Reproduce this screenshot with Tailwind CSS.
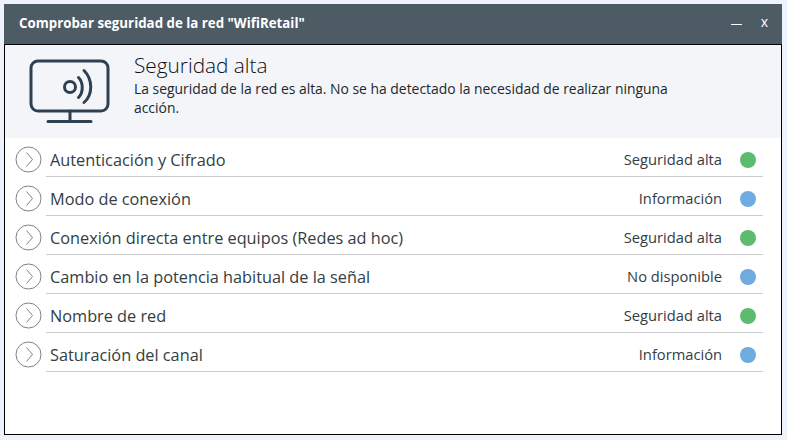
<!DOCTYPE html>
<html lang="es">
  <head>
    <meta charset="UTF-8" />
    <title>Comprobar seguridad</title>
    <script src="https://cdn.jsdelivr.net/npm/@tailwindcss/browser@4"></script>
  </head>
  <body class="bg-[#eef2fa] font-['Open_Sans',sans-serif] text-[#333d44]">
    <div class="w-[787px] h-[440px] pt-[4px] pl-[4px]">
      <div class="w-[778px] h-[431px] flex flex-col">
        <header class="h-[41px] shrink-0 bg-[#4d5b65] border-b border-black flex items-center pl-[15px] pr-[14px] text-white">
          <h1 class="text-[13.3px] font-bold">Comprobar seguridad de la red "WifiRetail"</h1>
          <div class="ml-auto flex items-center gap-[19px]">
            <span class="block w-[11px] h-px bg-white"></span>
            <span class="text-[14px] leading-none pb-[5px]">x</span>
          </div>
        </header>
        <div class="flex-1 flex flex-col border-x border-b border-black bg-white min-h-0">
          <section class="h-[93px] shrink-0 bg-[#f3f5f8] flex pl-[24px]">
            <svg class="mt-[14px] shrink-0" width="82" height="66" viewBox="0 0 82 66" fill="none" stroke="#2f4052" stroke-width="3" stroke-linecap="round">
              <rect x="2" y="2" width="77" height="50" rx="7" />
              <path d="M41 52v10.500M19 62.500h43" />
              <circle cx="41" cy="28" r="5.500" />
              <path d="M49.500 18.500c5 5 5 15 0 20M55 11.500c9 9 9 24 0 32" />
            </svg>
            <div class="ml-[23px] pt-[7px]">
              <h2 class="text-[20.800px] font-light leading-[27px] text-[#0c1014]">Seguridad alta</h2>
              <p class="w-[560px] text-[13.900px] leading-[19px] text-[#20282e]">La seguridad de la red es alta. No se ha detectado la necesidad de realizar ninguna acción.</p>
            </div>
          </section>
          <ul class="pl-[10px] pr-[18px]">
            <li class="h-[39px] flex">
              <svg class="mt-[8px] shrink-0" width="27" height="27" viewBox="0 0 27 27" fill="none" stroke="#808080"><circle cx="13.500" cy="13.500" r="12.500" /><path d="M11.500 6.500l6 7-6 7" /></svg>
              <div class="ml-[4px] flex-1 h-full flex items-center border-b border-[#cccccc] pt-[6px] pl-[4px] pr-[7px]">
                <span class="text-[16.300px]">Autenticación y Cifrado</span>
                <span class="ml-auto pb-[2px] text-[14.700px]">Seguridad alta</span>
                <span class="ml-[18px] w-[16px] h-[16px] rounded-full bg-[#5dba6f]"></span>
              </div>
            </li>
            <li class="h-[39px] flex">
              <svg class="mt-[8px] shrink-0" width="27" height="27" viewBox="0 0 27 27" fill="none" stroke="#808080"><circle cx="13.500" cy="13.500" r="12.500" /><path d="M11.500 6.500l6 7-6 7" /></svg>
              <div class="ml-[4px] flex-1 h-full flex items-center border-b border-[#cccccc] pt-[6px] pl-[4px] pr-[7px]">
                <span class="text-[16.300px]">Modo de conexión</span>
                <span class="ml-auto pb-[2px] text-[14.700px]">Información</span>
                <span class="ml-[18px] w-[16px] h-[16px] rounded-full bg-[#6fabe0]"></span>
              </div>
            </li>
            <li class="h-[39px] flex">
              <svg class="mt-[8px] shrink-0" width="27" height="27" viewBox="0 0 27 27" fill="none" stroke="#808080"><circle cx="13.500" cy="13.500" r="12.500" /><path d="M11.500 6.500l6 7-6 7" /></svg>
              <div class="ml-[4px] flex-1 h-full flex items-center border-b border-[#cccccc] pt-[6px] pl-[4px] pr-[7px]">
                <span class="text-[16.300px]">Conexión directa entre equipos (Redes ad hoc)</span>
                <span class="ml-auto pb-[2px] text-[14.700px]">Seguridad alta</span>
                <span class="ml-[18px] w-[16px] h-[16px] rounded-full bg-[#5dba6f]"></span>
              </div>
            </li>
            <li class="h-[39px] flex">
              <svg class="mt-[8px] shrink-0" width="27" height="27" viewBox="0 0 27 27" fill="none" stroke="#808080"><circle cx="13.500" cy="13.500" r="12.500" /><path d="M11.500 6.500l6 7-6 7" /></svg>
              <div class="ml-[4px] flex-1 h-full flex items-center border-b border-[#cccccc] pt-[6px] pl-[4px] pr-[7px]">
                <span class="text-[16.300px]">Cambio en la potencia habitual de la señal</span>
                <span class="ml-auto pb-[2px] text-[14.700px]">No disponible</span>
                <span class="ml-[18px] w-[16px] h-[16px] rounded-full bg-[#6fabe0]"></span>
              </div>
            </li>
            <li class="h-[39px] flex">
              <svg class="mt-[8px] shrink-0" width="27" height="27" viewBox="0 0 27 27" fill="none" stroke="#808080"><circle cx="13.500" cy="13.500" r="12.500" /><path d="M11.500 6.500l6 7-6 7" /></svg>
              <div class="ml-[4px] flex-1 h-full flex items-center border-b border-[#cccccc] pt-[6px] pl-[4px] pr-[7px]">
                <span class="text-[16.300px]">Nombre de red</span>
                <span class="ml-auto pb-[2px] text-[14.700px]">Seguridad alta</span>
                <span class="ml-[18px] w-[16px] h-[16px] rounded-full bg-[#5dba6f]"></span>
              </div>
            </li>
            <li class="h-[39px] flex">
              <svg class="mt-[8px] shrink-0" width="27" height="27" viewBox="0 0 27 27" fill="none" stroke="#808080"><circle cx="13.500" cy="13.500" r="12.500" /><path d="M11.500 6.500l6 7-6 7" /></svg>
              <div class="ml-[4px] flex-1 h-full flex items-center border-b border-[#cccccc] pt-[6px] pl-[4px] pr-[7px]">
                <span class="text-[16.300px]">Saturación del canal</span>
                <span class="ml-auto pb-[2px] text-[14.700px]">Información</span>
                <span class="ml-[18px] w-[16px] h-[16px] rounded-full bg-[#6fabe0]"></span>
              </div>
            </li>
          </ul>
        </div>
      </div>
    </div>
  </body>
</html>
